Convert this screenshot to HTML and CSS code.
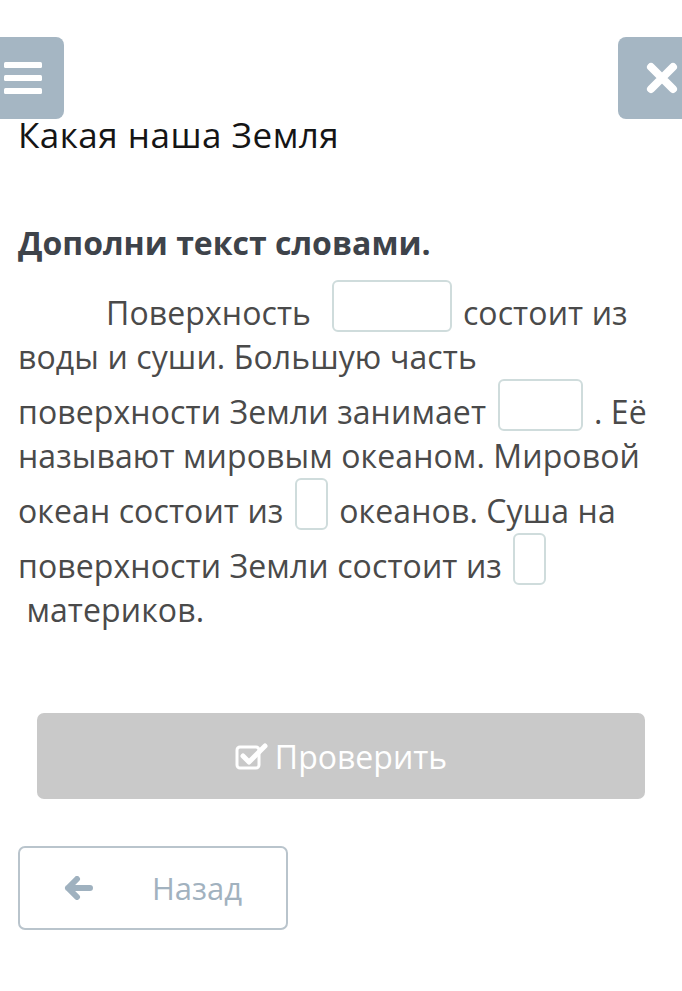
FILE: index.html
```html
<!DOCTYPE html>
<html lang="ru">
  <head>
    <meta charset="UTF-8">
    <meta name="viewport" content="width=device-width, initial-scale=1.0">
    <title>Какая наша Земля</title>
    <link rel="stylesheet" href="styles.css">
  </head>
  <body>
    <header class="topbar">
      <button class="icon-btn menu-btn" aria-label="Меню">
        <svg width="38" height="32" viewBox="0 0 38 32">
          <rect x="0" y="0" width="38" height="6" rx="1.5" fill="#fff"/>
          <rect x="0" y="13" width="38" height="6" rx="1.5" fill="#fff"/>
          <rect x="0" y="26" width="38" height="6" rx="1.5" fill="#fff"/>
        </svg>
      </button>
      <button class="icon-btn close-btn" aria-label="Закрыть">
        <svg width="32" height="32" viewBox="0 0 32 32">
          <path d="M5 5 L27 27 M27 5 L5 27" stroke="#fff" stroke-width="8" stroke-linecap="round"/>
        </svg>
      </button>
    </header>
    <main class="task">
      <h1 class="task-title">Какая наша Земля</h1>
      <h2 class="task-hint">Дополни текст словами.</h2>
      <p class="task-text">Поверхность <span class="gap gap-wide"></span> состоит из воды и суши. Большую часть поверхности Земли занимает <span class="gap gap-mid"></span> . Её называют мировым океаном. Мировой океан состоит из <span class="gap gap-small"></span> океанов. Суша на поверхности Земли состоит из <span class="gap gap-small"></span> &nbsp;материков.</p>
      <button class="check-btn">
        <svg width="34" height="28" viewBox="0 0 34 28">
          <rect x="2" y="5" width="22" height="21" rx="3" fill="none" stroke="#fff" stroke-width="3"/>
          <path d="M8 14 L14 20 L30 4" fill="none" stroke="#fff" stroke-width="5" stroke-linecap="round" stroke-linejoin="round"/>
        </svg>
        Проверить
      </button>
      <button class="back-btn">
        <svg width="30" height="24" viewBox="0 0 30 24">
          <path d="M4 12 L26 12 M13 3 L4 12 L13 21" fill="none" stroke="#9fb1bf" stroke-width="6" stroke-linecap="round" stroke-linejoin="round"/>
        </svg>
        <span>Назад</span>
      </button>
    </main>
  </body>
</html>
```
FILE: styles.css
```css
body {
  margin: 0;
  background: #fff;
  font-family: "Open Sans", "Liberation Sans", sans-serif;
}
.topbar {
  display: flex;
  justify-content: space-between;
  margin-top: 37px;
}
.icon-btn {
  border: none;
  background-color: #a5b6c3;
  height: 82px;
  display: flex;
  align-items: center;
  padding: 0;
}
.menu-btn {
  width: 64px;
  border-radius: 0 8px 8px 0;
  padding-left: 4px;
}
.close-btn {
  width: 64px;
  border-radius: 8px 0 0 8px;
  padding-left: 28px;
}
.task {
  padding: 0 32px 0 18px;
}
.task-title {
  margin: 0;
  font-size: 35px;
  font-weight: 400;
  color: #151515;
  line-height: 32px;
  letter-spacing: 0.5px;
}
.task-hint {
  margin: 72px 0 0;
  font-size: 32px;
  font-weight: 700;
  color: #3e434a;
  line-height: 40px;
}
.task-text {
  margin: 17px 0 0;
  font-size: 32px;
  line-height: 44px;
  letter-spacing: 0.1px;
  color: #4a4a4a;
  text-indent: 88px;
}
.gap {
  display: inline-block;
  height: 52px;
  margin: 0 3px;
  border: 2px solid #cfdcdc;
  border-radius: 6px;
  vertical-align: -7px;
  box-sizing: border-box;
}
.gap-wide { width: 120px; margin-left: 12px; }
.gap-mid { width: 85px; }
.gap-small { width: 33px; }
.check-btn {
  display: flex;
  align-items: center;
  justify-content: center;
  gap: 6px;
  width: 608px;
  height: 86px;
  margin: 81px 0 0 19px;
  border: none;
  border-radius: 7px;
  background-color: #c9c9c9;
  color: #fff;
  font-family: inherit;
  font-size: 32px;
}
.back-btn {
  display: flex;
  align-items: center;
  width: 270px;
  height: 84px;
  margin-top: 47px;
  padding: 0 0 0 44px;
  border: 2px solid #b9c4cc;
  border-radius: 7px;
  background: #fff;
  color: #a2b2bf;
  font-family: inherit;
  font-size: 31px;
}
.back-btn span {
  margin-left: 58px;
}
```
